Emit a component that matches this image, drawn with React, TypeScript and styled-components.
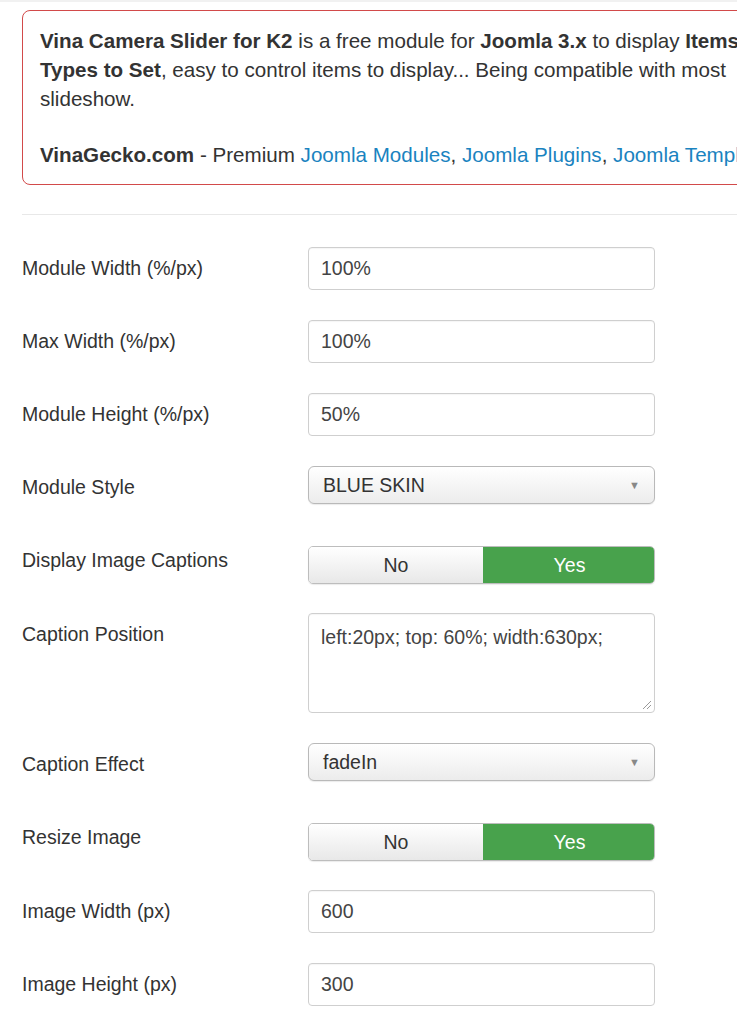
import React from "react";
import styled, { createGlobalStyle } from "styled-components";

const Global = createGlobalStyle`
  html, body { margin: 0; padding: 0; background: #fff; }
  body {
    width: 737px;
    overflow: hidden;
    font-family: "Liberation Sans", Arial, sans-serif;
    color: #333;
  }
`;

const Page = styled.div`
  padding: 8px 0 0 22px;
  border-top: 2px solid #f1f1f1;
`;

const Alert = styled.div`
  width: 900px;
  box-sizing: border-box;
  border: 1.5px solid #d24a4a;
  border-radius: 8px;
  padding: 15px 17px 15px 17px;
  font-size: 20.6px;
  line-height: 29px;
  color: #333;
  white-space: nowrap;
`;

const Para = styled.p<{ $gap?: boolean }>`
  margin: 0 0 ${(p) => (p.$gap ? "27px" : "0")} 0;
`;

const Link = styled.a`
  color: #1a83c0;
  text-decoration: none;
`;

const Rule = styled.hr`
  border: 0;
  border-top: 1px solid #e8e8e8;
  margin: 29px 0 32px 0;
  width: 800px;
`;

const Form = styled.div`
  display: flex;
  flex-direction: column;
  gap: 30px;
`;

const Row = styled.div`
  display: grid;
  grid-template-columns: 286px 347px;
  align-items: start;
`;

const Label = styled.label`
  font-size: 19.5px;
  line-height: 43px;
  color: #333;
`;

const Input = styled.div`
  height: 43px;
  box-sizing: border-box;
  border: 1px solid #cfcfcf;
  border-radius: 4px;
  padding: 0 12px;
  font-size: 19.5px;
  line-height: 41px;
  color: #444;
  background: #fff;
  box-shadow: inset 0 1px 1px rgba(0,0,0,0.04);
`;

const TextArea = styled(Input)`
  height: 100px;
  line-height: 24px;
  padding-top: 11px;
  position: relative;
`;

const Grip = styled.svg`
  position: absolute;
  right: 2px;
  bottom: 2px;
`;

const SelectWrap = styled.div`
  height: 43px;
`;

const Select = styled.div`
  height: 38px;
  box-sizing: border-box;
  border: 1px solid #b9b9b9;
  border-radius: 6px;
  padding: 0 14px;
  display: flex;
  align-items: center;
  justify-content: space-between;
  font-size: 19.5px;
  color: #333;
  background: linear-gradient(#ffffff, #ececec);
  box-shadow: 0 1px 1px rgba(0,0,0,0.08);
`;

const Caret = styled.span`
  font-size: 11px;
  color: #888;
`;

const Toggle = styled.div`
  margin: 7px 0 -1px 0;
  height: 38px;
  display: grid;
  grid-template-columns: 174px 173px;
  border-radius: 5px;
  overflow: hidden;
  border: 1px solid #bdbdbd;
  box-sizing: border-box;
  box-shadow: 0 1px 1px rgba(0,0,0,0.08);
`;

const ToggleBtn = styled.div<{ $active?: boolean }>`
  display: flex;
  align-items: center;
  justify-content: center;
  font-size: 19.5px;
  color: ${(p) => (p.$active ? "#fff" : "#333")};
  background: ${(p) =>
    p.$active ? "#48a24c" : "linear-gradient(#ffffff, #e8e8e8)"};
`;

const TextField = ({ value }: { value: string }) => <Input>{value}</Input>;

const SelectField = ({ value }: { value: string }) => (
  <SelectWrap>
    <Select>
      <span>{value}</span>
      <Caret>▼</Caret>
    </Select>
  </SelectWrap>
);

const YesNo = () => (
  <Toggle>
    <ToggleBtn>No</ToggleBtn>
    <ToggleBtn $active>Yes</ToggleBtn>
  </Toggle>
);

export default function App() {
  return (
    <>
      <Global />
      <Page>
        <Alert>
          <Para>
            <b>Vina Camera Slider for K2</b> is a free module for <b>Joomla 3.x</b> to display <b>Items</b>
          </Para>
          <Para>
            <b>Types to Set</b>, easy to control items to display... Being compatible with most
          </Para>
          <Para $gap>slideshow.</Para>
          <Para>
            <b>VinaGecko.com</b> - Premium <Link>Joomla Modules</Link>, <Link>Joomla Plugins</Link>, <Link>Joomla Templates</Link>
          </Para>
        </Alert>
        <Rule />
        <Form>
          <Row>
            <Label>Module Width (%/px)</Label>
            <TextField value="100%" />
          </Row>
          <Row>
            <Label>Max Width (%/px)</Label>
            <TextField value="100%" />
          </Row>
          <Row>
            <Label>Module Height (%/px)</Label>
            <TextField value="50%" />
          </Row>
          <Row>
            <Label>Module Style</Label>
            <SelectField value="BLUE SKIN" />
          </Row>
          <Row>
            <Label>Display Image Captions</Label>
            <YesNo />
          </Row>
          <Row>
            <Label>Caption Position</Label>
            <TextArea>
              left:20px; top: 60%; width:630px;
              <Grip width="12" height="12" viewBox="0 0 12 12">
                <line x1="11" y1="3" x2="3" y2="11" stroke="#999" strokeWidth="1" />
                <line x1="11" y1="7" x2="7" y2="11" stroke="#999" strokeWidth="1" />
              </Grip>
            </TextArea>
          </Row>
          <Row>
            <Label>Caption Effect</Label>
            <SelectField value="fadeIn" />
          </Row>
          <Row>
            <Label>Resize Image</Label>
            <YesNo />
          </Row>
          <Row>
            <Label>Image Width (px)</Label>
            <TextField value="600" />
          </Row>
          <Row>
            <Label>Image Height (px)</Label>
            <TextField value="300" />
          </Row>
        </Form>
      </Page>
    </>
  );
}
